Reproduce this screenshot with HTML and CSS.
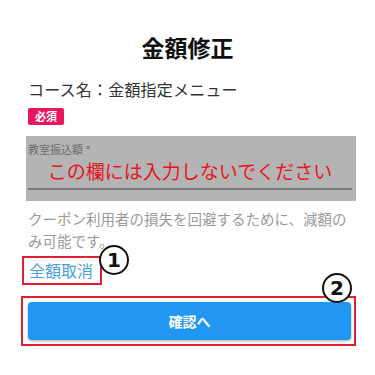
FILE: index.html
```html
<!DOCTYPE html>
<html lang="ja">
<head>
<meta charset="UTF-8">
<title>金額修正</title>
<link rel="stylesheet" href="styles.css">
</head>
<body>
<div class="page">
	<h1 class="title">金額修正</h1>
	<div class="course">コース名：金額指定メニュー</div>
	<span class="badge">必須</span>

	<div class="field">
		<div class="field-label">教室振込額 *</div>
		<div class="field-input">この欄には入力しないでください</div>
	</div>

	<p class="help">クーポン利用者の損失を回避するために、減額のみ可能です。</p>

	<div class="cancel-wrap">
		<a class="cancel" href="#">全額取消</a>
		<span class="mark mark-1">1</span>
	</div>

	<div class="submit-wrap">
		<button class="submit" type="button">確認へ</button>
		<span class="mark mark-2">2</span>
	</div>
</div>
</body>
</html>
```

FILE: styles.css
```css
html {

	font-family: "Noto Sans CJK JP", "Noto Sans", sans-serif;
	color: #222;
}
body {

	margin: 0;
	background: #fff;
}
.page {

	padding: 32px 21px 0 21px;
}
.title {

	margin: 0;
	font-size: 23px;
	line-height: 30px;
	font-weight: bold;
	text-align: center;
	color: #111;
}
.course {

	margin: 16px 0 0 7px;
	font-size: 16px;
	letter-spacing: .2px;
	line-height: 22px;
	color: #333;
}
.badge {

	display: inline-block;
	margin: 8px 0 0 7px;
	padding: 0 7px;
	height: 17px;
	line-height: 17px;
	font-size: 11px;
	font-weight: bold;
	color: #fff;
	background: #e8155f;
	border-radius: 2px;
}
.field {

	margin: 10px -2px 0 5px;
	height: 65px;
	padding: 6px 4px 0 2px;
	box-sizing: border-box;
	background: #b4b4b4;
}
.field-label {

	font-size: 11px;
	line-height: 14px;
	color: #6c6c6c;
}
.field-input {

	margin-top: 3px;
	font-size: 19px;
	line-height: 24px;
	color: #e8141e;
	text-align: center;
	border-bottom: 2px solid #7a7a7a;
	padding-bottom: 5px;
}
.help {

	margin: 7px 0 0 7px;
	font-size: 14.5px;
	line-height: 22px;
	color: #9a9a9a;
}
.cancel-wrap {

	position: relative;
	display: inline-block;
	margin: 4px 0 0 1px;
	border: 2px solid #e02030;
	padding: 0 7px 1px 5px;
}
.cancel {

	font-size: 16px;
	line-height: 24px;
	color: #4a9fe2;
	text-decoration: none;
}
.submit-wrap {

	position: relative;
	margin: 11px -2px 0 0;
	border: 2px solid #e02030;
	padding: 4px 3px 4px 5px;
}
.submit {

	display: block;
	width: 100%;
	height: 38px;
	border: 0;
	border-radius: 4px;
	background: #2196f3;
	color: #fff;
	font-family: inherit;
	font-size: 14px;
	font-weight: bold;
	box-shadow: 0 1px 3px rgba(0, 0, 0, .35);
}
.mark {

	position: absolute;
	width: 26px;
	height: 26px;
	border: 2px solid #111;
	border-radius: 50%;
	background: #fff;
	font-family: "DejaVu Sans", sans-serif;
	font-size: 20px;
	font-weight: bold;
	line-height: 26px;
	text-align: center;
	color: #111;
}
.mark-1 {

	top: -13px;
	right: -29px;
}
.mark-2 {

	top: -25px;
	right: 2px;
}
```
